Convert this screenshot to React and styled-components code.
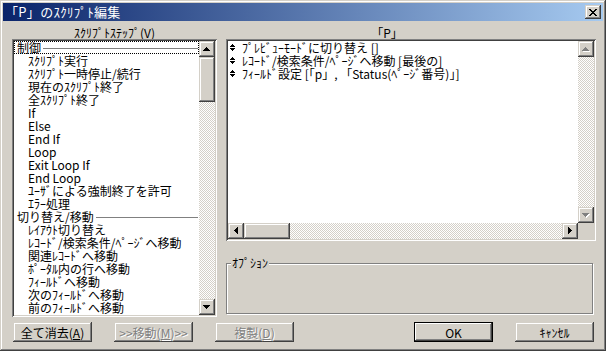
import React from 'react';
import styled, { createGlobalStyle, css } from 'styled-components';

const GlobalStyle = createGlobalStyle`
  html, body { margin: 0; padding: 0; background: #d4d0c8; }
  body { font-family: "Noto Sans CJK JP", "Liberation Sans", sans-serif; }
`;

const raised = css`
  background: #d4d0c8;
  box-shadow: inset -1px -1px #404040, inset 1px 1px #d4d0c8,
    inset -2px -2px #808080, inset 2px 2px #ffffff;
`;

const sunken = css`
  box-shadow: inset 1px 1px #808080, inset -1px -1px #ffffff,
    inset 2px 2px #404040, inset -2px -2px #d4d0c8;
`;

const checker = css`
  background-color: #ffffff;
  background-image: repeating-conic-gradient(#d4d0c8 0 25%, #ffffff 0 50%);
  background-size: 2px 2px;
`;

const Window = styled.div`
  width: 606px;
  height: 351px;
  box-sizing: border-box;
  padding: 3px;
  display: flex;
  flex-direction: column;
  background: #d4d0c8;
  box-shadow: inset -1px -1px #404040, inset 1px 1px #d4d0c8,
    inset -2px -2px #808080, inset 2px 2px #ffffff;
  font-size: 12px;
  color: #000;
`;

const TitleBar = styled.div`
  height: 18px;
  flex: none;
  display: flex;
  align-items: center;
  justify-content: space-between;
  padding: 0 2px 0 2px;
  background: linear-gradient(to right, #0a246a, #a6caf0);
  color: #fff;
`;

const TitleText = styled.span`
  font-size: 13px;
  line-height: 18px;
  letter-spacing: 0.3px;
`;

const CloseButton = styled.div`
  ${raised};
  width: 16px;
  height: 14px;
  display: flex;
  align-items: center;
  justify-content: center;
`;

const Body = styled.div`
  flex: 1;
  display: flex;
  flex-direction: column;
  padding: 5px 7px 6px 9px;
`;

const Main = styled.div`
  display: flex;
  gap: 9px;
  align-items: flex-start;
`;

const Column = styled.div`
  width: ${(p) => p.$width}px;
  display: flex;
  flex-direction: column;
`;

const ColLabel = styled.div`
  height: 13px;
  line-height: 13px;
  font-size: 12px;
  text-align: center;
  padding-right: ${(p) => p.$shift || 0}px;
  white-space: nowrap;
`;

const ListBox = styled.div`
  ${sunken};
  background: #fff;
  padding: 2px;
  height: ${(p) => p.$height}px;
  box-sizing: border-box;
  display: flex;
`;

const GridBox = styled.div`
  ${sunken};
  background: #fff;
  padding: 2px;
  height: ${(p) => p.$height}px;
  box-sizing: border-box;
  display: grid;
  grid-template-columns: 1fr 16px;
  grid-template-rows: 1fr 16px;
`;

const Rows = styled.div`
  flex: 1;
  min-width: 0;
`;

const Row = styled.div`
  height: 13px;
  line-height: 13px;
  font-size: 12px;
  display: flex;
  align-items: center;
  white-space: nowrap;
  padding-left: ${(p) => p.$indent}px;
  box-sizing: border-box;
  ${(p) =>
    p.$focus &&
    css`
      outline: 1px dotted #000;
      outline-offset: -1px;
    `}
`;

const RowText = styled.span`
  flex: none;
`;

const Rule = styled.span`
  flex: 1;
  height: 1px;
  margin: 2px 1px 0 2px;
  background: #808080;
`;

const VScroll = styled.div`
  width: 16px;
  display: flex;
  flex-direction: column;
`;

const HScroll = styled.div`
  height: 16px;
  display: flex;
`;

const ScrollBtn = styled.div`
  ${raised};
  width: 16px;
  height: 16px;
  flex: none;
  display: flex;
  align-items: center;
  justify-content: center;
`;

const Track = styled.div`
  ${checker};
  flex: 1;
`;

const Thumb = styled.div`
  ${raised};
  flex: none;
  ${(p) => (p.$vertical ? `height: ${p.$size}px; width: 16px;` : `width: ${p.$size}px; height: 16px;`)}
`;

const Corner = styled.div`
  background: #d4d0c8;
`;

const ScriptRow = styled.div`
  height: 13px;
  line-height: 13px;
  font-size: 12px;
  display: flex;
  align-items: center;
  white-space: nowrap;
  padding-left: 2px;
  gap: 7px;
`;

const Group = styled.fieldset`
  margin: 16px 3px 0 0;
  padding: 0;
  min-width: 0;
  height: 57px;
  box-sizing: border-box;
  border: 1px solid #808080;
  box-shadow: inset 1px 1px #ffffff, 1px 1px #ffffff;
`;

const Legend = styled.legend`
  font-size: 12px;
  line-height: 12px;
  margin-left: 4px;
  padding: 0 1px;
  background: #d4d0c8;
`;

const ButtonRow = styled.div`
  margin-top: 5px;
  display: flex;
  justify-content: space-between;
  padding: 0 2px 0 1px;
`;

const ButtonGroup = styled.div`
  display: flex;
  gap: 22px;
`;

const Button = styled.div`
  width: 79px;
  height: 20px;
  box-sizing: border-box;
  display: flex;
  align-items: center;
  justify-content: center;
  font-size: 12px;
  line-height: 13px;
  white-space: nowrap;
  ${raised};
  ${(p) =>
    p.$default &&
    css`
      box-shadow: inset 0 0 0 1px #000, inset -2px -2px #404040,
        inset 2px 2px #ffffff, inset -3px -3px #808080;
    `}
  ${(p) =>
    p.$disabled &&
    css`
      color: #808080;
      text-shadow: 1px 1px #ffffff;
    `}
`;

const ARROWS = {
  up: 'M3 0h1v1h-1z M2 1h3v1h-3z M1 2h5v1h-5z M0 3h7v1h-7z',
  down: 'M0 0h7v1h-7z M1 1h5v1h-5z M2 2h3v1h-3z M3 3h1v1h-1z',
  left: 'M0 3h1v1h-1z M1 2h1v3h-1z M2 1h1v5h-1z M3 0h1v7h-1z',
  right: 'M3 3h1v1h-1z M2 2h1v3h-1z M1 1h1v5h-1z M0 0h1v7h-1z',
};

function Arrow({ dir, disabled }) {
  const horiz = dir === 'left' || dir === 'right';
  const w = horiz ? 4 : 7;
  const h = horiz ? 7 : 4;
  return (
    <svg width={w + 1} height={h + 1} viewBox={`0 0 ${w + 1} ${h + 1}`} shapeRendering="crispEdges">
      {disabled && <path d={ARROWS[dir]} fill="#fff" transform="translate(1 1)" />}
      <path d={ARROWS[dir]} fill={disabled ? '#808080' : '#000'} />
    </svg>
  );
}

function StepIcon() {
  return (
    <svg width="5" height="7" viewBox="0 0 5 7" shapeRendering="crispEdges">
      <path d="M2 0h1v1h-1z M1 1h3v1h-3z M0 2h5v1h-5z M0 4h5v1h-5z M1 5h3v1h-3z M2 6h1v1h-1z" fill="#000" />
    </svg>
  );
}

const leftItems = [
  { cat: '制御' },
  'ｽｸﾘﾌﾟﾄ実行',
  'ｽｸﾘﾌﾟﾄ一時停止/続行',
  '現在のｽｸﾘﾌﾟﾄ終了',
  '全ｽｸﾘﾌﾟﾄ終了',
  'If',
  'Else',
  'End If',
  'Loop',
  'Exit Loop If',
  'End Loop',
  'ﾕｰｻﾞによる強制終了を許可',
  'ｴﾗｰ処理',
  { cat: '切り替え/移動' },
  'ﾚｲｱｳﾄ切り替え',
  'ﾚｺｰﾄﾞ/検索条件/ﾍﾟｰｼﾞへ移動',
  '関連ﾚｺｰﾄﾞへ移動',
  'ﾎﾟｰﾀﾙ内の行へ移動',
  'ﾌｨｰﾙﾄﾞへ移動',
  '次のﾌｨｰﾙﾄﾞへ移動',
  '前のﾌｨｰﾙﾄﾞへ移動',
];

const scriptSteps = [
  'ﾌﾟﾚﾋﾞｭｰﾓｰﾄﾞに切り替え []',
  'ﾚｺｰﾄﾞ/検索条件/ﾍﾟｰｼﾞへ移動 [最後の]',
  'ﾌｨｰﾙﾄﾞ設定 [「p」, 「Status(ﾍﾟｰｼﾞ番号)」]',
];

export default function App() {
  return (
    <>
      <GlobalStyle />
      <Window>
        <TitleBar>
          <TitleText>「P」のｽｸﾘﾌﾟﾄ編集</TitleText>
          <CloseButton>
            <svg width="8" height="7" viewBox="0 0 8 7" shapeRendering="crispEdges">
              <path
                d="M0 0h2v1h-2z M6 0h2v1h-2z M1 1h2v1h-2z M5 1h2v1h-2z M2 2h4v1h-4z M3 3h2v1h-2z M2 4h4v1h-4z M1 5h2v1h-2z M5 5h2v1h-2z M0 6h2v1h-2z M6 6h2v1h-2z"
                fill="#000"
              />
            </svg>
          </CloseButton>
        </TitleBar>
        <Body>
          <Main>
            <Column $width={205}>
              <ColLabel>
                ｽｸﾘﾌﾟﾄｽﾃｯﾌﾟ(<u>V</u>)
              </ColLabel>
              <ListBox $height={278}>
                <Rows>
                  {leftItems.map((it, i) =>
                    typeof it === 'string' ? (
                      <Row key={i} $indent={14}>
                        <RowText>{it}</RowText>
                      </Row>
                    ) : (
                      <Row key={i} $indent={3} $focus={i === 0}>
                        <RowText>{it.cat}</RowText>
                        <Rule />
                      </Row>
                    )
                  )}
                </Rows>
                <VScroll>
                  <ScrollBtn>
                    <Arrow dir="up" />
                  </ScrollBtn>
                  <Thumb $vertical $size={45} />
                  <Track />
                  <ScrollBtn>
                    <Arrow dir="down" />
                  </ScrollBtn>
                </VScroll>
              </ListBox>
            </Column>
            <Column $width={370}>
              <ColLabel $shift={48}>「P」</ColLabel>
              <GridBox $height={202}>
                <Rows>
                  {scriptSteps.map((s, i) => (
                    <ScriptRow key={i}>
                      <StepIcon />
                      <RowText>{s}</RowText>
                    </ScriptRow>
                  ))}
                </Rows>
                <VScroll>
                  <ScrollBtn>
                    <Arrow dir="up" disabled />
                  </ScrollBtn>
                  <Track />
                  <ScrollBtn>
                    <Arrow dir="down" disabled />
                  </ScrollBtn>
                </VScroll>
                <HScroll>
                  <ScrollBtn>
                    <Arrow dir="left" />
                  </ScrollBtn>
                  <Thumb $size={46} />
                  <Track />
                  <ScrollBtn>
                    <Arrow dir="right" />
                  </ScrollBtn>
                </HScroll>
                <Corner />
              </GridBox>
              <Group>
                <Legend>ｵﾌﾟｼｮﾝ</Legend>
              </Group>
            </Column>
          </Main>
          <ButtonRow>
            <ButtonGroup>
              <Button>
                全て消去(<u>A</u>)
              </Button>
              <Button $disabled>
                &gt;&gt;移動(<u>M</u>)&gt;&gt;
              </Button>
              <Button $disabled>
                複製(<u>D</u>)
              </Button>
            </ButtonGroup>
            <ButtonGroup>
              <Button $default>OK</Button>
              <Button>ｷｬﾝｾﾙ</Button>
            </ButtonGroup>
          </ButtonRow>
        </Body>
      </Window>
    </>
  );
}
